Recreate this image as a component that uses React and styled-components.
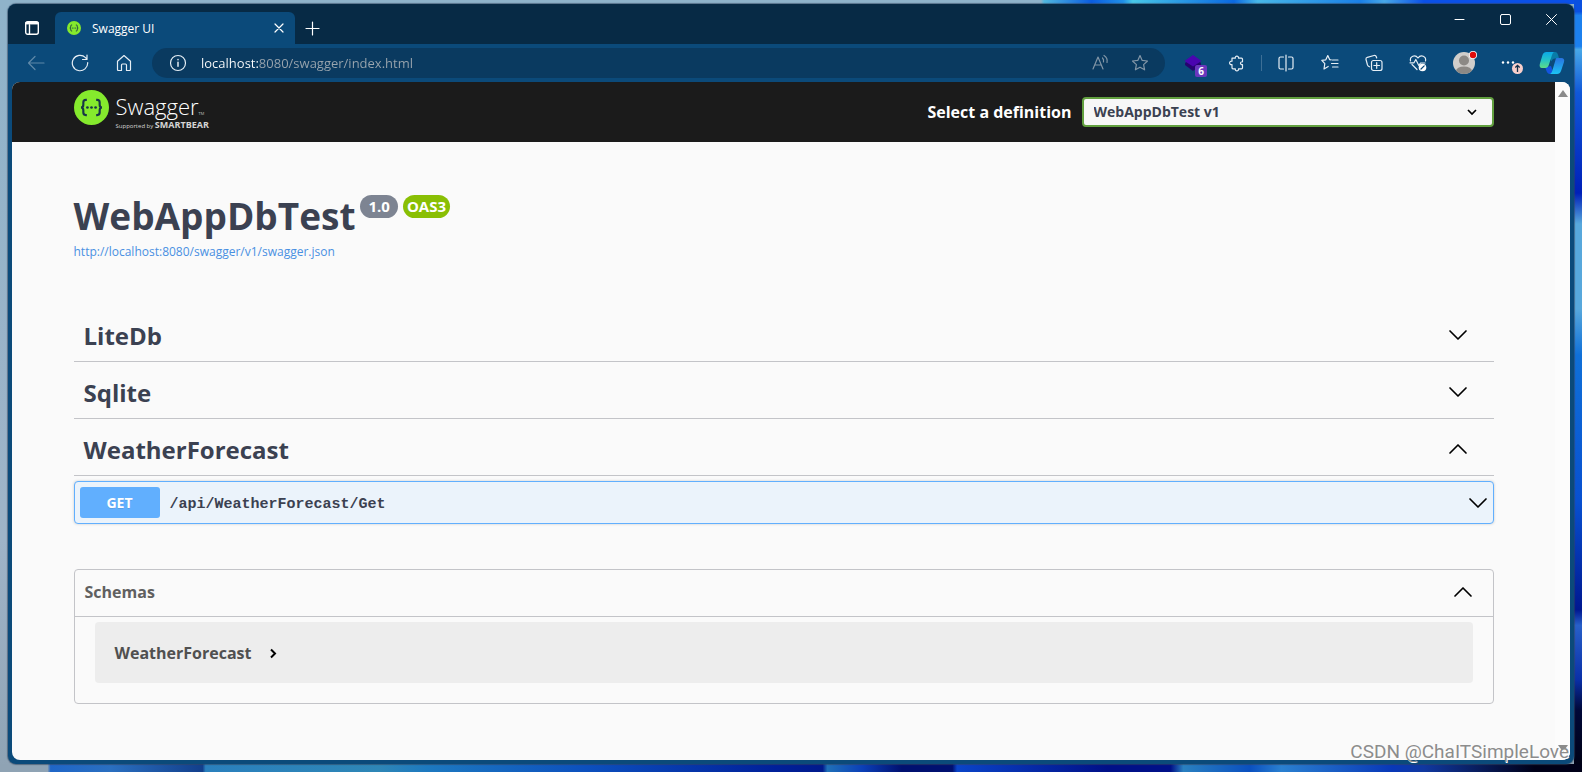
import React, { useState } from 'react';
import styled, { createGlobalStyle } from 'styled-components';

const GlobalStyle = createGlobalStyle`
  * {
    box-sizing: border-box;
  }

  body {
    margin: 0;
    font-family: 'Open Sans', 'Noto Sans', sans-serif;
    color: #3b4151;
  }

  button {
    margin: 0;
    padding: 0;
    border: 0;
    background: none;
    color: inherit;
    font: inherit;
    cursor: pointer;
  }

  h1, h2, h3 {
    margin: 0;
  }
`;

/* desktop: the wallpaper shows as a thin rim on every side */
const Desktop = styled.div`
  display: flex;
  position: relative;
  min-height: 100vh;
  padding: 4px 8px 8px;
  background:
    linear-gradient(90deg, #8fa3b4 0 3%, #1f66c8 3.2%, #2a6fc0 7%, #123f8c 12.8%, #2a80bd 13%, #2e86b6 24%,
      #1d79c0 27%, #0c50be 37%, #00209a 49%, #001a8c 52%, #1f70b8 52.3%, #0b40b8 54.5%, #001070 57%, #001070 60.2%,
      #0a44c8 60.5%, #001088 70%, #001088 74%, #2a80c0 74.8%, #0a50c0 79%, #2a80d0 81%, #0838b8 88%, #1038a0 90%,
      #000018 97%) 0 100% / 100% 8px no-repeat,
    linear-gradient(180deg, #0a50e0 0 1.5%, #1c80ee 2% 6%, #48a8e8 6.4%, #1058d8 12%, #0020b8 25%, #58a8dc 29%,
      #58a8dc 40%, #1070d8 46%, #0850d0 65%, #001890 79%, #2860c8 81%, #0a30a8 88%, #000838 92%, #000010)
      100% 0 / 8px 100% no-repeat,
    linear-gradient(90deg, #8fb3ca 0 65.8%, #50b8e0 66%, #0a5ce0 69%, #2090e8 71%, #48c8e8 71.6%, #0a68e0 78%,
      #48b8e8 79.5%, #1a80e8 86%, #48a8e8 87.5%, #0a50e8 90%) 0 0 / 100% 4px no-repeat,
    linear-gradient(180deg, #8fb3ca, #9fb4c8 70%, #8fa3b4);
`;

const BrowserWindow = styled.div`
  display: flex;
  flex: 1;
  flex-direction: column;
  min-width: 0;
  border-radius: 8px;
  background: #0b4a7a;
  box-shadow: 0 0 1px 1px rgba(50, 70, 95, 0.6);
  overflow: hidden;
`;

const TitleBar = styled.header`
  display: flex;
  height: 40px;
  background: #072a45;
  color: #fff;
`;

const TabMenu = styled.button`
  display: flex;
  align-items: center;
  justify-content: center;
  width: 47px;
  padding-top: 8px;
`;

const Tab = styled.div`
  display: flex;
  align-items: center;
  width: 240px;
  margin-top: 8px;
  padding: 0 6px 0 12px;
  border-radius: 6px 6px 0 0;
  background: #0b4a7a;
  font-size: 12px;
`;

const TabTitle = styled.span`
  flex: 1;
  margin-left: 11px;
`;

const TabClose = styled.button`
  display: grid;
  place-items: center;
  width: 20px;
  height: 20px;
`;

const NewTab = styled.button`
  display: grid;
  place-items: center;
  width: 34px;
  margin-top: 8px;
`;

const WindowButtons = styled.div`
  display: flex;
  height: 30px;
  margin-left: auto;
`;

const WindowButton = styled.button`
  display: grid;
  place-items: center;
  width: 46px;
`;

const Toolbar = styled.nav`
  display: flex;
  align-items: center;
  height: 38px;
  padding-left: 6px;
  color: #e6eef5;
`;

const ToolButton = styled.button`
  display: grid;
  position: relative;
  place-items: center;
  width: 44px;
  height: 30px;
  margin-left: ${(props) => (props.$spaced ? '2px' : '0')};
  color: ${(props) => (props.$dim ? '#5f88a8' : 'inherit')};
`;

const Divider = styled.span`
  width: 1px;
  height: 16px;
  margin: 0 2px;
  background: #3d6f96;
`;

const AddressBar = styled.div`
  display: flex;
  flex: 1;
  align-items: center;
  height: 30px;
  margin: 0 6px;
  padding: 0 5px 0 17px;
  border-radius: 15px;
  background: #0a3a60;
`;

/* the host part is white, port and path are dimmed */
const AddressInput = styled.input`
  flex: 1;
  min-width: 0;
  margin-left: 14px;
  padding: 0;
  border: 0;
  outline: 0;
  background: linear-gradient(90deg, #fff 58px, #9aa5ae 58px);
  background-clip: text;
  -webkit-text-fill-color: transparent;
  font: 13px 'Open Sans', 'Noto Sans', sans-serif;
`;

const AddressButton = styled.button`
  display: grid;
  place-items: center;
  width: 40px;
  color: #8195a6;
`;

const CountBadge = styled.span`
  position: absolute;
  right: 8px;
  bottom: 1px;
  width: 12px;
  border-radius: 2px;
  background: #6b37bd;
  color: #fff;
  font-size: 10px;
  font-weight: 700;
  line-height: 12px;
  text-align: center;
`;

const Viewport = styled.div`
  display: flex;
  flex: 1;
  margin: 0 4px 4px;
  border-radius: 8px;
  background: #fafafa;
  overflow: hidden;
`;

const Page = styled.div`
  flex: 1;
  min-width: 0;
`;

const Scrollbar = styled.div`
  display: flex;
  flex-direction: column;
  align-items: center;
  justify-content: space-between;
  width: 15px;
  padding: 8px 0;
  background: #fcfcfc;
  color: #8b8b8b;
`;

const Wrapper = styled.div`
  max-width: 1460px;
  margin: 0 auto;
  padding: 0 20px;
`;

const Topbar = styled.div`
  background: #1b1b1b;
`;

const TopbarRow = styled(Wrapper)`
  display: flex;
  align-items: center;
  justify-content: space-between;
  height: 60px;
`;

const LogoLink = styled.a`
  display: flex;
  align-items: flex-start;
  gap: 7px;
  color: #fff;
  text-decoration: none;
`;

const LogoText = styled.span`
  display: flex;
  flex-direction: column;
  padding: 3px 0 2px;
`;

const LogoName = styled.span`
  font-size: 22px;
  font-weight: 300;
  line-height: 26px;

  small {
    font-size: 4px;
    line-height: 4px;
  }
`;

const LogoTagline = styled.span`
  color: #d5d5d5;
  font-size: 6px;
  line-height: 12px;

  b {
    font-size: 9px;
  }
`;

const Definition = styled.label`
  display: flex;
  align-items: center;
  gap: 10px;
  color: #fff;
  font-size: 16px;
  font-weight: 700;
`;

const SelectBox = styled.span`
  display: grid;
  position: relative;
  width: 412px;

  svg {
    position: absolute;
    top: 12px;
    right: 17px;
    pointer-events: none;
  }
`;

const Select = styled.select`
  height: 30px;
  padding: 0 10px 2px;
  border: 2px solid #62a03f;
  border-radius: 4px;
  outline: 0;
  appearance: none;
  background: #f7f7f7;
  color: #3b4151;
  font: 700 14px 'Open Sans', 'Noto Sans', sans-serif;
`;

const Info = styled.section`
  padding: 48px 0 43px;
`;

const Title = styled.h1`
  display: flex;
  align-items: flex-start;
  gap: 5px;
  font-size: 37px;
  font-weight: 700;
  line-height: 52px;
`;

const Badge = styled.small`
  margin-top: 5px;
  padding: 0 ${(props) => (props.$green ? '4px' : '8px')};
  border-radius: 12px;
  background: ${(props) => (props.$green ? '#89bf04' : '#7d8492')};
  color: #fff;
  font-size: 15px;
  line-height: 23px;
`;

const SpecLink = styled.a`
  display: block;
  color: #4990e2;
  font-size: 12px;
  line-height: 20px;
  text-decoration: none;
`;

const TagHeader = styled.h2`
  border-bottom: 1px solid #c3c4c8;
`;

const TagButton = styled.button`
  display: flex;
  align-items: center;
  justify-content: space-between;
  width: 100%;
  height: 56px;
  padding: 4px 26px 0 10px;
  font-size: 24px;
  font-weight: 700;
`;

const Operation = styled.div`
  margin: 5px 0 45px;
  border: 1px solid #61affe;
  border-radius: 4px;
  background: #ebf3fb;
  box-shadow: 0 0 3px rgba(0, 0, 0, 0.19);
`;

const OperationButton = styled.button`
  display: flex;
  align-items: center;
  width: 100%;
  padding: 5px;
`;

const Method = styled.span`
  width: 80px;
  border-radius: 3px;
  background: #61affe;
  color: #fff;
  font-size: 14px;
  font-weight: 700;
  line-height: 31px;
  text-align: center;
  text-shadow: 0 1px 0 rgba(0, 0, 0, 0.1);
`;

const Path = styled.span`
  flex: 1;
  padding: 3px 10px 0;
  font-family: 'Liberation Mono', monospace;
  font-size: 15px;
  font-weight: 700;
  text-align: left;
`;

const Models = styled.section`
  padding-bottom: 20px;
  border: 1px solid #c3c4c8;
  border-radius: 4px;
`;

const ModelsButton = styled.button`
  display: flex;
  align-items: center;
  justify-content: space-between;
  width: 100%;
  height: 46px;
  padding: 0 20px 2px 10px;
  color: #606060;
  font-size: 16px;
  font-weight: 700;
`;

const ModelList = styled.div`
  padding: 5px 20px 0;
  border-top: 1px solid #c3c4c8;
`;

const ModelBox = styled.button`
  display: flex;
  align-items: center;
  gap: 18px;
  width: 100%;
  height: 61px;
  padding: 0 20px;
  border-radius: 4px;
  background: #ededed;
  color: #505050;
  font-size: 16px;
  font-weight: 700;
`;

const Watermark = styled.div`
  position: absolute;
  right: 13px;
  bottom: 9px;
  color: #8c8c8c;
  font: 19px/22px Roboto, 'Liberation Sans', sans-serif;
  text-shadow: 1px 1px 0 #fff;
`;

const Icon = ({ size = 18, width = 1.2, children }) => (
  <svg
    width={size}
    height={size}
    viewBox={`0 0 ${size} ${size}`}
    fill="none"
    stroke="currentColor"
    strokeWidth={width}
    strokeLinecap="round"
    strokeLinejoin="round"
    aria-hidden="true"
  >
    {children}
  </svg>
);

const Chevron = ({ up }) => (
  <Icon size={20} width={1.7}>
    <g stroke="#000">
      {up ? <path d="M2 14 10 6l8 8" /> : <path d="M2 6l8 8 8-8" />}
    </g>
  </Icon>
);

const SwaggerMark = ({ size }) => (
  <svg width={size} height={size} viewBox="0 0 36 36" aria-hidden="true">
    <circle cx="18" cy="18" r="18" fill="#85ea2d" />
    <g fill="none" stroke="#173647" strokeWidth="2.2">
      <path d="M13.2 10.2h-1c-1.800 0-2.600.8-2.600 2.600v2.400c0 1.700-.7 2.800-2.400 2.800 1.700 0 2.400 1.100 2.400 2.800v2.400c0 1.800.8 2.600 2.600 2.600h1" />
      <path d="M22.800 10.200h1c1.800 0 2.600.8 2.600 2.600v2.400c0 1.700.7 2.800 2.400 2.800-1.700 0-2.400 1.100-2.400 2.800v2.400c0 1.800-.8 2.600-2.600 2.600h-1" />
    </g>
    <g fill="#173647">
      <circle cx="13.800" cy="18" r="1.400" />
      <circle cx="18" cy="18" r="1.400" />
      <circle cx="22.200" cy="18" r="1.400" />
    </g>
  </svg>
);

const Avatar = () => (
  <svg width="26" height="26" viewBox="0 0 26 26" aria-hidden="true">
    <clipPath id="face">
      <circle cx="13" cy="13" r="11" />
    </clipPath>
    <g clipPath="url(#face)">
      <rect width="26" height="26" fill="#d0cecb" />
      <circle cx="13" cy="10.500" r="5" fill="#8c8985" />
      <ellipse cx="13" cy="21" rx="8" ry="4.500" fill="#8c8985" />
    </g>
    <circle cx="22" cy="5" r="4" fill="#fff" />
    <circle cx="22" cy="5" r="3.200" fill="#e00b0b" />
  </svg>
);

const Copilot = () => (
  <svg width="26" height="26" viewBox="0 0 26 26" aria-hidden="true">
    <defs>
      <linearGradient id="cpLeft" x1="0" y1="0" x2="0" y2="1">
        <stop offset="0" stopColor="#0aa8e8" />
        <stop offset="0.5" stopColor="#25c3c8" />
        <stop offset="1" stopColor="#5fdc84" />
      </linearGradient>
      <linearGradient id="cpRight" x1="0" y1="0" x2="0" y2="1">
        <stop offset="0" stopColor="#2a72e0" />
        <stop offset="1" stopColor="#1cc4f4" />
      </linearGradient>
    </defs>
    <path d="M8 2h8c2 0 2.600 1.500 3.100 3l1 3.500h-4c-2 0-3 1-3.500 3z" fill="#087ca8" />
    <path d="M6 17l6-1 3 8h-4c-2 0-3-1.500-3.500-3z" fill="#1454e0" />
    <path d="M7.500 2h8c-1.300 0-2 1.500-2.500 3l-3.200 10c-.7 2-1.800 3-3.500 3H3C.8 18 .3 16 .8 14L3.500 5c.7-2 2-3 4-3z" fill="url(#cpLeft)" />
    <path d="M17.500 8h4.700c2.700 0 3.500 2 2.800 4l-3 9c-.7 2-2 3-4 3h-7.500c1.500 0 2.300-1.500 2.700-3l3-10c.5-2 .9-3 1.300-3z" fill="url(#cpRight)" />
  </svg>
);

const starPath = 'M9 1.500l2.200 4.900 5.300.6-3.900 3.600 1 5.200L9 13.200l-4.600 2.600 1-5.200L1.500 7l5.300-.6z';

const TopChrome = () => (
  <TitleBar>
    <TabMenu aria-label="Tab actions menu">
      <Icon size={16} width={1.4}>
        <rect x="1.700" y="1.700" width="12.600" height="12.600" rx="2" />
        <path d="M2 3.500h12M5.500 5v9" />
        <path d="M2.500 3h11" strokeWidth="2.500" />
      </Icon>
    </TabMenu>
    <Tab>
      <SwaggerMark size={14} />
      <TabTitle>Swagger UI</TabTitle>
      <TabClose aria-label="Close tab">
        <Icon size={10}>
          <path d="M1 1l8 8M9 1L1 9" />
        </Icon>
      </TabClose>
    </Tab>
    <NewTab aria-label="New tab">
      <Icon size={15}>
        <path d="M7.500 1v13M1 7.500h13" />
      </Icon>
    </NewTab>
    <WindowButtons>
      <WindowButton aria-label="Minimize">
        <Icon size={11} width={1}>
          <path d="M1 5.500h9" />
        </Icon>
      </WindowButton>
      <WindowButton aria-label="Maximize">
        <Icon size={11} width={1}>
          <rect x="0.500" y="0.500" width="10" height="10" rx="1.500" />
        </Icon>
      </WindowButton>
      <WindowButton aria-label="Close window">
        <Icon size={11} width={1}>
          <path d="M0.500 0.500l10 10M10.500 0.500l-10 10" />
        </Icon>
      </WindowButton>
    </WindowButtons>
  </TitleBar>
);

const BrowserToolbar = () => {
  const [address, setAddress] = useState('localhost:8080/swagger/index.html');

  return (
    <Toolbar>
      <ToolButton $dim aria-label="Back">
        <Icon>
          <path d="M17 9H1.500M8 2.500L1.500 9 8 15.500" />
        </Icon>
      </ToolButton>
      <ToolButton aria-label="Refresh">
        <Icon>
          <path d="M16.700 8.500A7.700 7.700 0 1 1 14.500 3.600L16 5.300M16 1v4.500h-4.500" />
        </Icon>
      </ToolButton>
      <ToolButton aria-label="Home">
        <Icon>
          <path d="M2.500 7.200L9 1.500l6.500 5.700v8.300q0 1-1 1h-3v-5.500q0-1-1-1h-3q-1 0-1 1v5.500h-3q-1 0-1-1z" />
        </Icon>
      </ToolButton>
      <AddressBar>
        <Icon>
          <circle cx="9" cy="9" r="7.500" />
          <path d="M9 8.200v4M9 5.500v.2" strokeWidth="1.500" />
        </Icon>
        <AddressInput
          aria-label="Address"
          value={address}
          onChange={(e) => setAddress(e.target.value)}
        />
        <AddressButton aria-label="Read aloud">
          <Icon>
            <path d="M2 15L7 3l5 12M3.700 11h6.600M11.500 4q1.500 1.500 1 4M13 1.500q4 2.500 3 7" />
          </Icon>
        </AddressButton>
        <AddressButton aria-label="Add to favorites">
          <Icon>
            <path d={starPath} />
          </Icon>
        </AddressButton>
      </AddressBar>
      <ToolButton aria-label="Extension">
        <svg width="18" height="18" viewBox="0 0 18 18" aria-hidden="true">
          <path d="M1 9l8-5 8 5v2l-8 6-8-6z" fill="#25046f" />
          <path d="M9 1l8.500 6L9 12.500.5 7z" fill="#4a05b0" />
        </svg>
        <CountBadge>6</CountBadge>
      </ToolButton>
      <ToolButton aria-label="Extensions">
        <Icon>
          <path d="M4 4.200h3.300c-.5-2.700 3.700-2.700 3.200 0h3q1 0 1 1v2.600c-2.700-.4-2.700 3.200 0 2.900v3.100q0 1-1 1h-3c.5 2.700-3.700 2.700-3.200 0H5q-1 0-1-1v-3.200c-3.200.4-3.200-3.800 0-3.400z" />
        </Icon>
      </ToolButton>
      <Divider />
      <ToolButton aria-label="Split screen">
        <Icon>
          <path d="M9 1v16M6.500 3H3.500Q2 3 2 4.500v9Q2 15 3.500 15h3M11.500 3h3Q16 3 16 4.500v9q0 1.500-1.500 1.500h-3" />
        </Icon>
      </ToolButton>
      <ToolButton aria-label="Favorites">
        <Icon>
          <path d="M10.200 5.800l-1.500-.1L6.800 1.500 4.800 5.800.8 6.400l3 3.300-.8 5.300 4.200-2.500M11.500 6H17M10.500 9.500H17M11.500 13H17" />
        </Icon>
      </ToolButton>
      <ToolButton aria-label="Collections">
        <Icon>
          <rect x="6.500" y="6.500" width="10.500" height="10" rx="2" />
          <path d="M11.700 8.700v5.600M8.900 11.500h5.600M4.500 12.800Q3 12.300 2.500 11L1 5.500Q.7 3.800 2.300 3.300L9 1.500q1.800-.4 2.300 1.200l.4 1.300" />
        </Icon>
      </ToolButton>
      <ToolButton aria-label="Browser essentials">
        <Icon>
          <path d="M1.500 7C.5 2.500 6-.2 9 4c3-4.200 8.500-1.500 7.500 3M3 10.500l5 5M1 8.800h4l1.800-3.300 3 6L11.500 9H16" />
          <circle cx="13.500" cy="13.500" r="3.800" fill="#fff" stroke="none" />
          <path d="M12 15l3.200-3.200" stroke="#0b4a7a" />
        </Icon>
      </ToolButton>
      <ToolButton $spaced aria-label="Profile">
        <Avatar />
      </ToolButton>
      <ToolButton aria-label="Settings and more">
        <svg width="30" height="26" viewBox="0 0 30 26" aria-hidden="true">
          <g fill="#fff">
            <circle cx="10" cy="12.500" r="1.200" />
            <circle cx="15" cy="12.500" r="1.200" />
            <circle cx="20" cy="12.500" r="1.200" />
          </g>
          <circle cx="24.500" cy="18.500" r="5.500" fill="#f8cfcb" />
          <path d="M24.500 22v-6.500M22.300 17.500l2.200-2.200 2.200 2.200" fill="none" stroke="#14314a" strokeWidth="1.300" />
        </svg>
      </ToolButton>
      <ToolButton aria-label="Copilot">
        <Copilot />
      </ToolButton>
    </Toolbar>
  );
};

const tags = [
  { name: 'LiteDb', open: false },
  { name: 'Sqlite', open: false },
  { name: 'WeatherForecast', open: true },
];

const App = () => (
  <>
    <GlobalStyle />
    <Desktop>
      <BrowserWindow>
        <TopChrome />
        <BrowserToolbar />
        <Viewport>
          <Page>
            <Topbar>
              <TopbarRow>
                <LogoLink href="#">
                  <SwaggerMark size={35} />
                  <LogoText>
                    <LogoName>
                      Swagger<small>TM</small>
                    </LogoName>
                    <LogoTagline>
                      Supported by <b>SMARTBEAR</b>
                    </LogoTagline>
                  </LogoText>
                </LogoLink>
                <Definition htmlFor="definition">
                  Select a definition
                  <SelectBox>
                    <Select id="definition" defaultValue="v1">
                      <option value="v1">WebAppDbTest v1</option>
                    </Select>
                    <svg width="10" height="7" viewBox="0 0 10 7" aria-hidden="true">
                      <path d="M1 1l4 4 4-4" fill="none" stroke="#000" strokeWidth="1.700" />
                    </svg>
                  </SelectBox>
                </Definition>
              </TopbarRow>
            </Topbar>

            <Wrapper>
              <Info>
                <Title>
                  WebAppDbTest
                  <Badge>1.0</Badge>
                  <Badge $green>OAS3</Badge>
                </Title>
                <SpecLink href="#">http://localhost:8080/swagger/v1/swagger.json</SpecLink>
              </Info>

              {tags.map((tag) => (
                <TagHeader key={tag.name}>
                  <TagButton aria-expanded={tag.open}>
                    {tag.name}
                    <Chevron up={tag.open} />
                  </TagButton>
                </TagHeader>
              ))}

              <Operation>
                <OperationButton>
                  <Method>GET</Method>
                  <Path>/api/WeatherForecast/Get</Path>
                  <Chevron />
                </OperationButton>
              </Operation>

              <Models>
                <ModelsButton aria-expanded="true">
                  Schemas
                  <Chevron up />
                </ModelsButton>
                <ModelList>
                  <ModelBox>
                    WeatherForecast
                    <svg width="8" height="12" viewBox="0 0 8 12" aria-hidden="true">
                      <path d="M2 2.500l4 4-4 4" fill="none" stroke="#000" strokeWidth="2" />
                    </svg>
                  </ModelBox>
                </ModelList>
              </Models>
            </Wrapper>
          </Page>
          <Scrollbar>
            <svg width="10" height="7" viewBox="0 0 10 7" aria-hidden="true">
              <path d="M5 0l5 7H0z" fill="currentColor" />
            </svg>
            <svg width="10" height="7" viewBox="0 0 10 7" aria-hidden="true">
              <path d="M0 0h10L5 7z" fill="currentColor" />
            </svg>
          </Scrollbar>
        </Viewport>
      </BrowserWindow>
      <Watermark>CSDN @ChaITSimpleLove</Watermark>
    </Desktop>
  </>
);

export default App;
